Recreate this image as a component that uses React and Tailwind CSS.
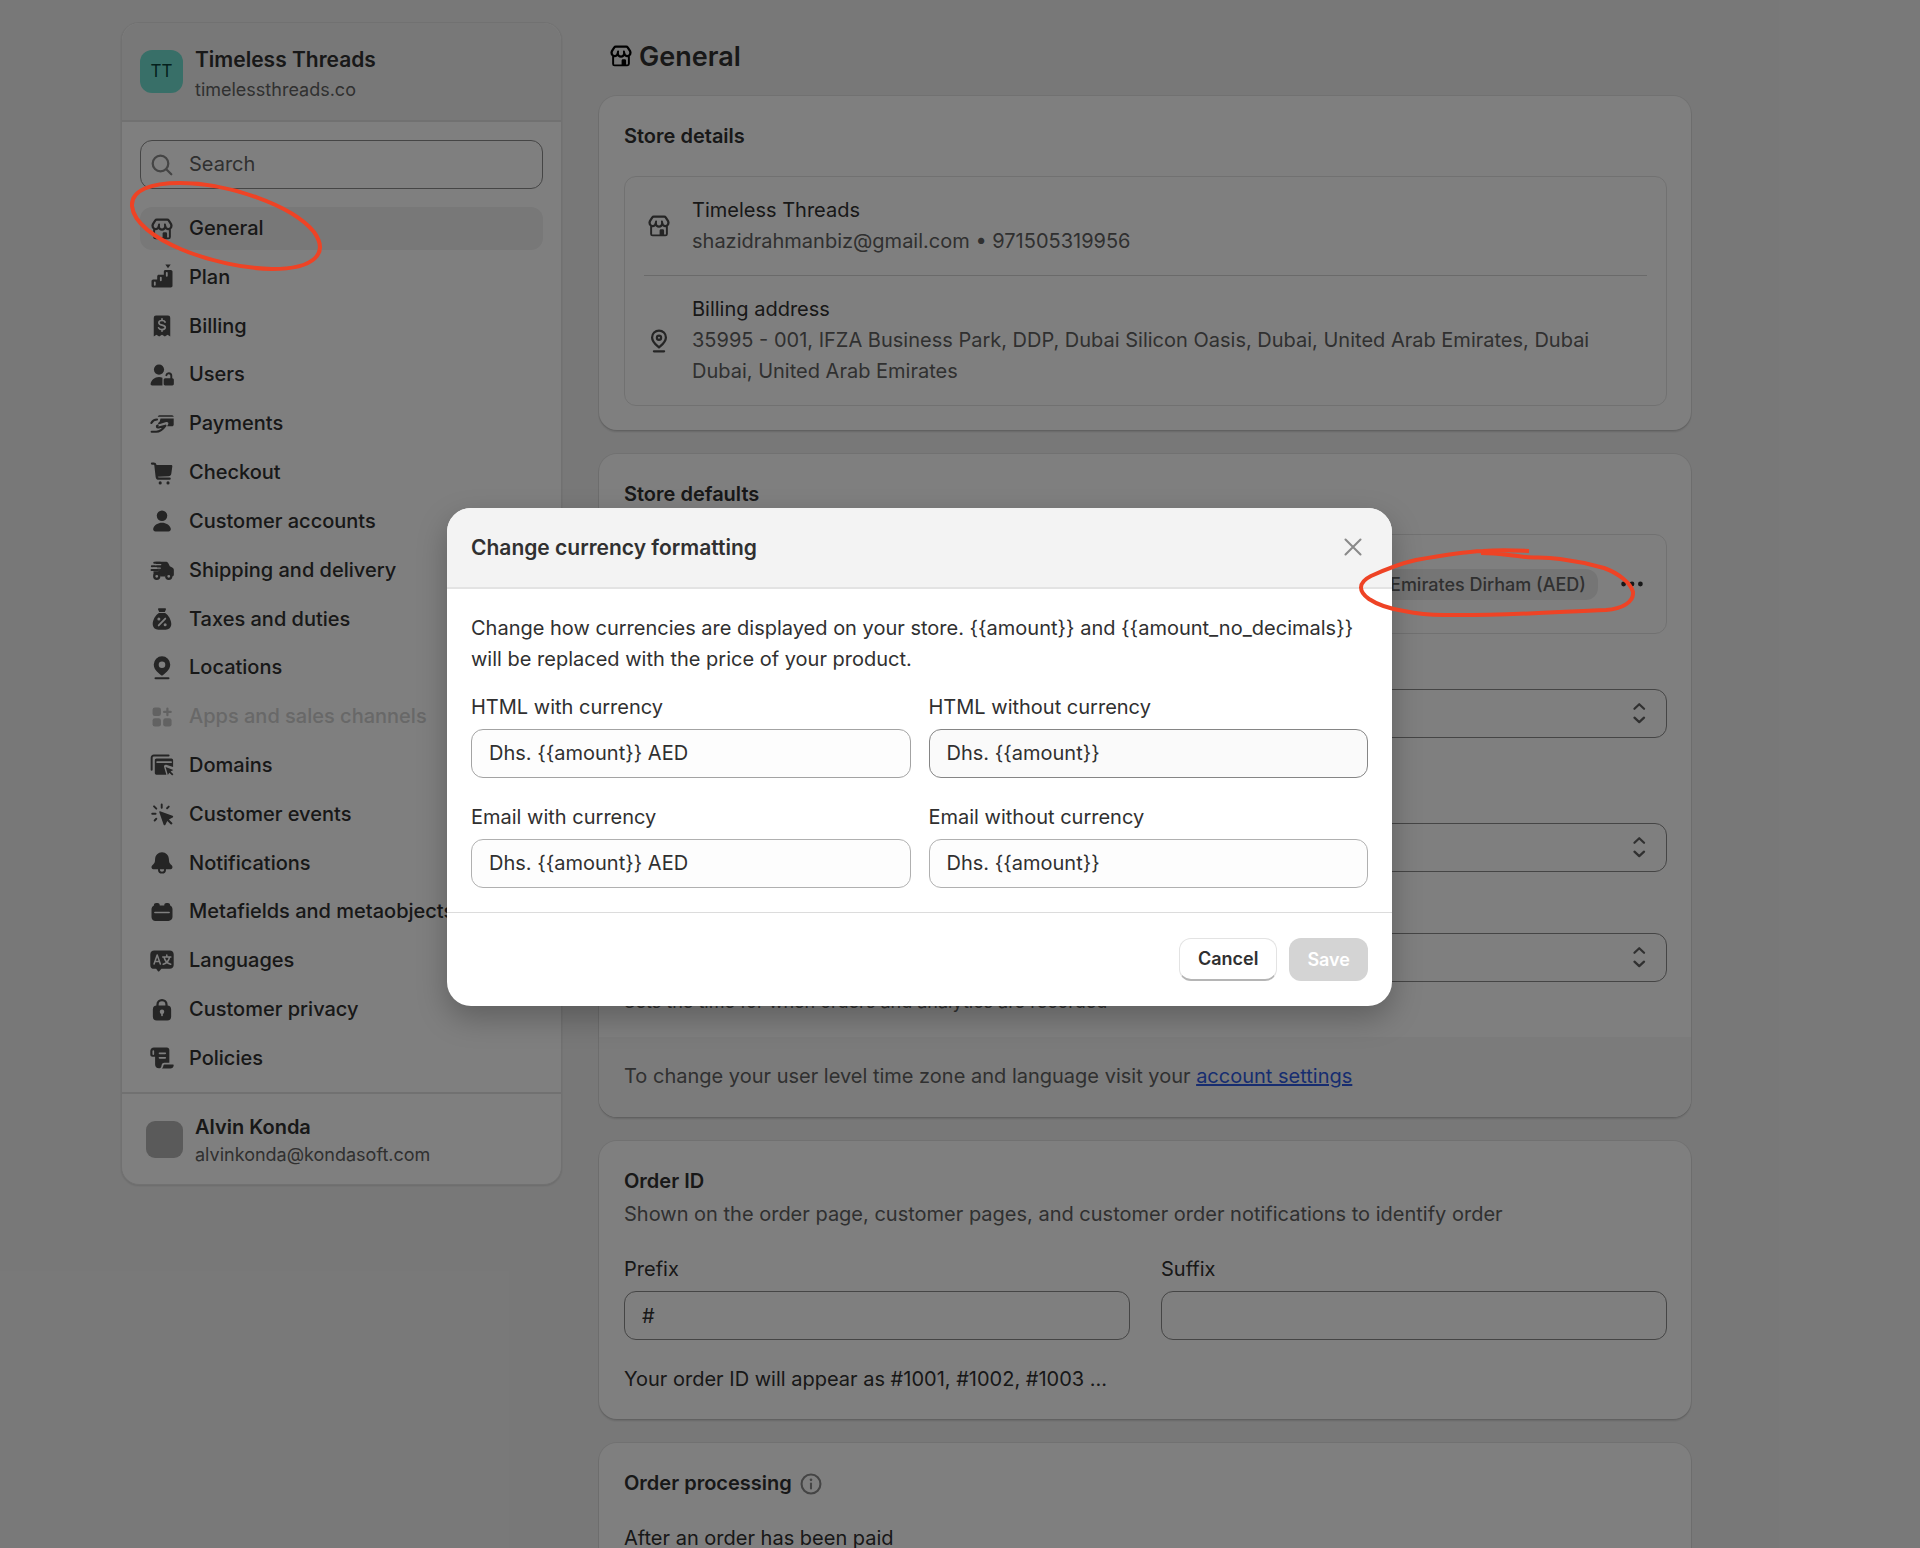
// App.jsx
import { useState } from "react";
import clsx from "clsx";

function Icon({ children, className }) {
  return (
    <svg viewBox="0 0 20 20" fill="currentColor" aria-hidden="true" className={clsx("size-[30px] shrink-0", className)}>
      {children}
    </svg>
  );
}

const line = { fill: "none", stroke: "currentColor", strokeWidth: 1.5, strokeLinecap: "round", strokeLinejoin: "round" };
const cut = { fill: "none", stroke: "#fff", strokeWidth: 1.1, strokeLinecap: "round", strokeLinejoin: "round" };

const StoreIcon = (props) => (
  <Icon {...props}>
    <path {...line} d="M6.5 3.75h7c.4 0 .75.2.95.55l1.500 2.300c.2.35.3.75.3 1.150a2.050 2.050 0 0 1-4.100.5 2.150 2.150 0 0 1-4.300 0 2.050 2.050 0 0 1-4.100-.5c0-.4.1-.8.3-1.150l1.500-2.300c.2-.35.55-.55.95-.55z" />
    <path {...line} strokeWidth={1.3} d="M7.850 8.100l.2-1.100M12.150 8.100l-.2-1.100M4.750 10.400v4.850c0 .55.45 1 1 1h8.500c.55 0 1-.45 1-1v-4.850" />
    <path d="M10.400 13.100c0-.5.400-.9.900-.9h1.200c.5 0 .9.400.9.900v3.400h-3z" />
  </Icon>
);

const PinIcon = () => (
  <Icon>
    <path {...line} d="M10 14.2c-1.3-1.2-4.6-3.3-4.6-6.6a4.6 4.6 0 0 1 9.2 0c0 3.3-3.3 5.4-4.6 6.6zM6.6 16.9h6.8" />
    <circle {...line} cx="10" cy="7.8" r="1.4" />
  </Icon>
);

const PlanIcon = () => (
  <Icon>
    <path d="M9.2 8.5h2V6.3c0-.6.5-1 1-1h3.700c.6 0 1.100.5 1.100 1v9.600c0 .6-.5 1.100-1.100 1.100H4.100c-.6 0-1.100-.5-1.100-1.100v-3.100c0-.6.5-1.100 1.100-1.100h2.700V9.500c0-.6.5-1 1-1z" />
    <path d="M12.2 1.700h3.600L14 4.100z" />
    <path {...cut} strokeWidth={1.2} d="M5.2 13.600v1.600M9.200 10.400v1.800M13.200 7.200v2" />
  </Icon>
);

const BillingIcon = () => (
  <Icon>
    <path d="M4.500 4.500A1.500 1.500 0 0 1 6 3h8a1.500 1.500 0 0 1 1.500 1.500V17l-1.800-1.200-1.800 1.200-1.900-1.200L8.100 17l-1.800-1.200L4.500 17z" />
    <path {...cut} d="M12.100 7.400c-.3-.8-1.100-1.100-2.100-1.100-1.200 0-2.100.5-2.100 1.500 0 2.200 4.300 1 4.300 3.100 0 1-.9 1.500-2.200 1.500-1.100 0-2-.4-2.300-1.200M10 5.200v1M10 12.500v1" />
  </Icon>
);

const UsersIcon = () => (
  <Icon>
    <circle cx="8" cy="6.400" r="3.400" />
    <path d="M10.300 17H3.400c-.6 0-1.100-.5-1-1.100.4-2.600 2.700-4.600 5.600-4.600.9 0 1.600.2 2.300.5z" />
    <path d="M11.100 13.200c0-.6.400-1.100 1-1.100h4.800c.600 0 1 .5 1 1.100v2.700c0 .6-.4 1.100-1 1.100h-4.800c-.6 0-1-.5-1-1.100z" />
    <path {...line} strokeWidth={1.3} d="M12.900 10.100c.2-.8.800-1.300 1.600-1.300 1 0 1.700.7 1.700 1.700v2" />
  </Icon>
);

const PaymentsIcon = () => (
  <Icon>
    <path d="M8.300 4.100h8.400c.6 0 1.100.5 1.100 1.100H7.200c0-.6.500-1.100 1.100-1.100zM9 6.400h8.800v4.100c0 .6-.5 1-1.100 1h-3.300l.8-1.500c.3-.9-.5-1.600-1.400-1.300l-5.200 1.600c-.6-.6.200-1.400.9-1.900z" />
    <path {...line} strokeWidth={1.400} d="M2.900 9.300c.8-1.500 1.800-2.200 3.800-2.300M3.100 15.200h3c2.600 0 4.400-1.500 6.200-4.100l-4.600 1.200c-1.200.2-1.500-.9-.6-1.300" />
  </Icon>
);

const CheckoutIcon = () => (
  <Icon>
    <path {...line} d="M3.300 3.700h1.200c.6 0 1 .4 1.100 1l.9 7.800c.1.800.6 1.300 1.400 1.300h7.200" />
    <path d="M5.600 4.600h10.500c.5 0 .9.400.8.900l-.7 5c-.1.900-.9 1.600-1.800 1.700l-8 .3z" />
    <circle cx="8.800" cy="16.600" r="1.050" />
    <circle cx="14" cy="16.600" r="1.050" />
  </Icon>
);

const PersonIcon = () => (
  <Icon>
    <circle cx="10" cy="6.500" r="3.500" />
    <path d="M4.200 14.900c.8-2.200 3-3.700 5.800-3.700s5 1.500 5.800 3.700c.4 1.100-.4 2.100-1.500 2.100H5.700c-1.100 0-1.900-1-1.500-2.100z" />
  </Icon>
);

const ShippingIcon = () => (
  <Icon>
    <path d="M5.600 4.500h6.900c.8 0 1.500.4 1.800 1.100l.9 1.900 1.600.8c.7.300 1.100 1 1.100 1.700v3c0 .7-.5 1.300-1.100 1.400a2.400 2.400 0 0 0-4.700 0H9a2.400 2.400 0 0 0-4.600-.6l-.1-3h3.200c.9 0 .9-1.400 0-1.400h-.6z" />
    <path {...line} strokeWidth={1.3} d="M4.800 5.200h4M3.200 7.500h5.200M3 10h4.500" />
    <path {...cut} strokeWidth={0.8} d="M5.500 6.350h3.700M4 8.800h4.900" />
    <circle {...line} cx="6.500" cy="14.200" r="1.700" />
    <circle {...line} cx="14.500" cy="14.200" r="1.700" />
  </Icon>
);

const TaxesIcon = () => (
  <Icon>
    <path d="M7.400 3.700c-.2-.5.100-.9.600-.9h4c.5 0 .8.400.6.900l-.7 1.600H8.100zM7.900 6h4.200c2.300 1.500 4.100 4.700 4.100 7.400 0 2.300-1.600 3.800-3.800 3.800H7.600c-2.200 0-3.800-1.500-3.800-3.800 0-2.700 1.800-5.900 4.100-7.400z" />
    <path {...cut} strokeWidth={1.2} d="M12.200 9.700l-4.400 4.600" />
    <circle cx="7.900" cy="10" r="1" fill="#fff" />
    <circle cx="12.100" cy="13.900" r="1" fill="#fff" />
  </Icon>
);

const LocationsIcon = () => (
  <Icon>
    <path fillRule="evenodd" d="M10 15.200c-1.700-1.300-5.500-3.700-5.500-7.500a5.500 5.500 0 0 1 11 0c0 3.800-3.800 6.200-5.500 7.500zM10 10a2.200 2.200 0 1 0 0-4.400A2.200 2.200 0 0 0 10 10z" />
    <path {...line} strokeWidth={1.400} d="M5.700 16.800h8.600" />
  </Icon>
);

const AppsIcon = () => (
  <Icon className="text-[#c4c4c4]">
    <rect x="3.700" y="3.700" width="5.600" height="5.600" rx="1.500" />
    <rect x="3.700" y="10.800" width="5.600" height="5.600" rx="1.500" />
    <rect x="10.800" y="10.800" width="5.600" height="5.600" rx="1.500" />
    <path {...line} d="M13.600 4.400v4.400M11.400 6.600h4.400" />
  </Icon>
);

const DomainsIcon = () => (
  <Icon>
    <path {...line} strokeWidth={1.300} d="M3.100 13.200V5.200c0-.9.600-1.500 1.500-1.500h9.800" />
    <path d="M5.200 6.700c0-.6.500-1.100 1.100-1.100h10c.6 0 1.100.5 1.100 1.100v4.700l-4.600-1.500c-.9-.3-1.700.500-1.400 1.400l1.500 5.200H6.300c-.6 0-1.100-.5-1.100-1.100z" />
    <path d="M12.400 11.400l5.200 1.900-1.900 1 1.900 1.900-.8.800-1.900-1.900-1 1.600z" />
    <path {...cut} d="M6.700 8.100h9.400" />
  </Icon>
);

const EventsIcon = () => (
  <Icon>
    <path d="M8.700 8.200l8.300 2.900c.6.200.6 1 .1 1.200l-2.500 1.300 2.500 2.600-1 1-2.600-2.600-1.200 2.500c-.3.600-1 .5-1.200 0L8.200 8.800c-.1-.4.200-.7.500-.6z" />
    <path {...line} strokeWidth={1.300} d="M9.800 3.600v2.200M4.700 4.900l1.500 1.500M3.500 9.800h2.200M6.200 13.200l-1.100 1.100M13.400 6.200l1.100-1.100" />
  </Icon>
);

const BellIcon = () => (
  <Icon>
    <path d="M10 2.800c2.600 0 4.500 2 4.600 4.500.1 2.300.4 2.900 1.700 4 1.300 1.200.7 2.900-1 2.900H4.700c-1.700 0-2.300-1.700-1-2.900 1.300-1.100 1.600-1.700 1.700-4C5.500 4.800 7.400 2.800 10 2.800z" />
    <path {...line} strokeWidth={1.300} d="M8 14.200v.4c0 1 .9 1.800 2 1.800s2-.8 2-1.800v-.4" />
  </Icon>
);

const MetafieldsIcon = () => (
  <Icon>
    <path d="M4.600 5.600V5.500c0-.9.6-1.500 1.500-1.500h.9c.9 0 1.500.6 1.500 1.500v.1h3V5.500c0-.9.6-1.500 1.500-1.500h.9c.9 0 1.500.6 1.500 1.500v.2c1 .4 1.600 1.400 1.600 2.500v5.200c0 1.500-1.200 2.600-2.700 2.600H5.700A2.600 2.600 0 0 1 3 13.400V8.200c0-1.100.6-2.200 1.600-2.600z" />
    <path {...cut} d="M5.300 10.300h9.400" />
  </Icon>
);

const LanguagesIcon = () => (
  <Icon>
    <path d="M4.800 3h10.400c1.500 0 2.600 1.100 2.600 2.600v7c0 1.500-1.100 2.600-2.600 2.600h-5.600l-1.400 1.600c-.3.300-.7.300-.9 0l-1.200-1.600H4.800a2.600 2.600 0 0 1-2.600-2.600v-7C2.200 4.100 3.300 3 4.800 3z" />
    <path {...cut} strokeWidth={1} d="M4.700 12l2.100-6 2.100 6M5.400 10.300h2.800M10.500 7.300h5.400M13.200 6v1.300M15 7.500c-.4 2.100-2.100 4-4.200 4.700M11.400 7.500c.4 2.100 2.200 4 4.400 4.700" />
  </Icon>
);

const LockIcon = () => (
  <Icon>
    <path {...line} d="M7 8V6.400a3 3 0 0 1 6 0V8" />
    <rect x="3.900" y="7" width="12.200" height="10" rx="2.600" />
    <circle cx="10" cy="11.100" r="1.500" fill="#fff" />
    <path {...cut} d="M10 11.500v2.100" />
  </Icon>
);

const PoliciesIcon = () => (
  <Icon>
    <path d="M4.600 3h8.700c.9 0 1.600.7 1.600 1.600v8.600h-3.300c-1.200 0-1.800.8-1.900 1.800-.1 1.300-.8 1.900-1.800 1.900-1.500 0-2.500-1-2.500-2.500V9.200H3.600c-.8 0-1.400-.5-1.400-1.300V5.400C2.200 4 3.200 3 4.600 3z" />
    <path d="M11.900 14.300h5.300c.4 0 .7.300.6.700-.2 1.200-1 2-2.200 2H9.900c.6-.5.900-1.100 1-1.900.1-.5.500-.8 1-.8z" />
    <path {...cut} d="M4.200 5.300v2.200M8.300 6.900h3.900M8.300 9.900h3.900" />
  </Icon>
);

const navItems = [
  { label: "General", icon: StoreIcon, active: true },
  { label: "Plan", icon: PlanIcon },
  { label: "Billing", icon: BillingIcon },
  { label: "Users", icon: UsersIcon },
  { label: "Payments", icon: PaymentsIcon },
  { label: "Checkout", icon: CheckoutIcon },
  { label: "Customer accounts", icon: PersonIcon },
  { label: "Shipping and delivery", icon: ShippingIcon },
  { label: "Taxes and duties", icon: TaxesIcon },
  { label: "Locations", icon: LocationsIcon },
  { label: "Apps and sales channels", icon: AppsIcon, disabled: true },
  { label: "Domains", icon: DomainsIcon },
  { label: "Customer events", icon: EventsIcon },
  { label: "Notifications", icon: BellIcon },
  { label: "Metafields and metaobjects", icon: MetafieldsIcon },
  { label: "Languages", icon: LanguagesIcon },
  { label: "Customer privacy", icon: LockIcon },
  { label: "Policies", icon: PoliciesIcon },
];

function Sidebar() {
  return (
    <aside className="w-[441px] shrink-0 rounded-[18px] border border-[#e3e3e3] bg-white shadow-[0_1px_2px_rgba(0,0,0,0.12)]">
      <div className="flex h-[99px] items-center gap-3 rounded-t-[18px] border-b-2 border-[#e3e3e3] bg-[#f1f1f1] px-[18px]">
        <div className="flex size-[43px] items-center justify-center rounded-xl bg-[#70dfd0] text-[17px] text-[#08423b]">TT</div>
        <div className="pt-[6px]">
          <div className="text-[21px] leading-[30px] font-semibold text-[#303030]">Timeless Threads</div>
          <div className="text-[18px] leading-[30px] text-[#616161]">timelessthreads.co</div>
        </div>
      </div>

      <div className="px-[18px] pt-[18px] pb-3">
        <label className="flex h-[49px] items-center gap-3 rounded-xl border border-[#8a8a8a] px-[6px] text-[#8a8a8a]">
          <Icon>
            <circle {...line} cx="9" cy="9" r="5.200" />
            <path {...line} d="M13 13l3.200 3.200" />
          </Icon>
          <input type="search" aria-label="Search" placeholder="Search" className="w-full bg-transparent text-[20px] outline-none placeholder:text-[#616161]" />
        </label>

        <nav className="mt-[18px] flex h-[873px] flex-col justify-between">
          {navItems.map(({ label, icon: ItemIcon, active, disabled }) => (
            <a
              key={label}
              href="#"
              className={clsx(
                "flex h-[43px] items-center gap-3 rounded-xl px-[7px] text-[20px] font-medium whitespace-nowrap",
                active && "bg-[#f1f1f1]",
                disabled ? "text-[#d0d0d0]" : "text-[#303030]"
              )}
            >
              <span className={disabled ? "" : "text-[#4a4a4a]"}>
                <ItemIcon />
              </span>
              {label}
            </a>
          ))}
        </nav>
      </div>

      <div className="flex h-[92px] items-center gap-3 border-t-2 border-[#e3e3e3] px-6">
        <div className="size-[37px] rounded-[9px] bg-[#b5b5b5]" />
        <div className="pt-[3px]">
          <div className="text-[20px] leading-[27px] font-semibold text-[#303030]">Alvin Konda</div>
          <div className="text-[18px] leading-[27px] text-[#616161]">alvinkonda@kondasoft.com</div>
        </div>
      </div>
    </aside>
  );
}

function Card({ children, className }) {
  return (
    <section className={clsx("rounded-[18px] bg-white shadow-[0_0_0_1px_rgba(0,0,0,0.06),0_2px_2px_rgba(0,0,0,0.14)]", className)}>
      {children}
    </section>
  );
}

function SelectField({ id, label, value }) {
  return (
    <div className="min-w-0 flex-1">
      <label htmlFor={id} className="mb-[6px] block">{label}</label>
      <div className="relative">
        <select id={id} className="block h-[49px] w-full appearance-none rounded-xl border border-[#8a8a8a] bg-white px-[18px]">
          <option>{value}</option>
        </select>
        <Icon className="pointer-events-none absolute top-[9px] right-3 text-[#616161]">
          <path {...line} d="M6.300 7.200l3.200-3 3.200 3M6.300 13.100l3.200 3 3.200-3" />
        </Icon>
      </div>
    </div>
  );
}

function TextField({ id, label, defaultValue, className }) {
  return (
    <div className="min-w-0 flex-1">
      <label htmlFor={id} className="mb-[6px] block">{label}</label>
      <input
        id={id}
        type="text"
        defaultValue={defaultValue}
        className={clsx("block h-[49px] w-full rounded-xl border px-[17px] outline-none", className)}
      />
    </div>
  );
}

function StoreDetails() {
  return (
    <Card className="pt-[25px] pr-6 pb-6 pl-[25px]">
      <h2 className="font-semibold">Store details</h2>
      <div className="mt-6 rounded-xl border border-[#e3e3e3] px-[19px]">
        <div className="flex items-center gap-[18px] border-b border-[#d4d4d4] py-[18px]">
          <StoreIcon className="text-[#4a4a4a]" />
          <div>
            <div>Timeless Threads</div>
            <div className="text-[#616161]">shazidrahmanbiz@gmail.com • 971505319956</div>
          </div>
        </div>
        <div className="flex items-center gap-[18px] py-[18px] text-[#4a4a4a]">
          <PinIcon />
          <div>
            <div className="text-[#303030]">Billing address</div>
            <div className="text-[#616161]">
              35995 - 001, IFZA Business Park, DDP, Dubai Silicon Oasis, Dubai, United Arab Emirates, Dubai
              <br />
              Dubai, United Arab Emirates
            </div>
          </div>
        </div>
      </div>
    </Card>
  );
}

function StoreDefaults() {
  return (
    <Card>
      <div className="pt-[25px] pr-6 pb-5 pl-[25px]">
        <h2 className="font-semibold">Store defaults</h2>
        <div className="mt-6 flex items-center rounded-xl border border-[#e3e3e3] px-[19px] py-[18px]">
          <div className="flex-1">
            <div>Currency display</div>
            <div className="text-[#616161]">To manage the currencies customers see</div>
          </div>
          <span className="rounded-xl bg-[#ebebeb] px-3 text-[18px] leading-[31px] font-medium text-[#616161]">
            United Arab Emirates Dirham (AED)
          </span>
          <button type="button" aria-label="More actions" className="ml-[19px] text-[#303030]">
            <Icon>
              <circle cx="4.400" cy="10" r="1.600" />
              <circle cx="10" cy="10" r="1.600" />
              <circle cx="15.600" cy="10" r="1.600" />
            </Icon>
          </button>
        </div>

        <div className="mt-[18px]">
          <SelectField id="region" label="Backup region" value="United Arab Emirates" />
          <p className="mt-1 text-[18px] leading-[31px] text-[#616161]">Determines settings for customers outside of your markets</p>
        </div>
        <div className="mt-[13px] flex gap-[31px]">
          <SelectField id="units" label="Unit system" value="Metric system" />
          <SelectField id="weight" label="Default weight unit" value="" />
        </div>
        <div className="mt-6">
          <SelectField id="timezone" label="Time zone" value="(GMT+04:00) Abu Dhabi, Muscat" />
          <p className="mt-1 text-[18px] leading-[31px] text-[#616161]">Sets the time for when orders and analytics are recorded</p>
        </div>
      </div>
      <div className="rounded-b-[18px] bg-[#f7f7f7] px-[25px] pt-6 pb-[25px] text-[#616161]">
        To change your user level time zone and language visit your{" "}
        <a href="#" className="text-[#2f5be0] underline">account settings</a>
      </div>
    </Card>
  );
}

function OrderId() {
  return (
    <Card className="pt-[25px] pr-6 pb-6 pl-[25px]">
      <h2 className="font-semibold">Order ID</h2>
      <p className="mt-[2px] text-[#616161]">Shown on the order page, customer pages, and customer order notifications to identify order</p>
      <div className="mt-6 flex gap-[31px]">
        <TextField id="prefix" label="Prefix" defaultValue="#" className="border-[#8a8a8a]" />
        <TextField id="suffix" label="Suffix" defaultValue="" className="border-[#8a8a8a]" />
      </div>
      <p className="mt-6">Your order ID will appear as #1001, #1002, #1003 ...</p>
    </Card>
  );
}

function OrderProcessing() {
  return (
    <Card className="pt-[25px] pr-6 pb-6 pl-[25px]">
      <h2 className="flex items-center gap-1 font-semibold">
        Order processing
        <Icon className="text-[#8a8a8a]">
          <circle {...line} strokeWidth={1.400} cx="10" cy="10" r="6.300" />
          <path {...line} strokeWidth={1.400} d="M10 9.700v3.300" />
          <circle cx="10" cy="7.200" r=".9" />
        </Icon>
      </h2>
      <p className="mt-6">After an order has been paid</p>
    </Card>
  );
}

function CurrencyModal({ onClose }) {
  return (
    <div className="absolute inset-0 flex items-center justify-center bg-black/50 pr-[81px] pb-[35px]">
      <div
        role="dialog"
        aria-labelledby="modal-title"
        className="w-[945px] overflow-hidden rounded-3xl bg-white shadow-[0_12px_30px_rgba(0,0,0,0.25)]"
      >
        <div className="flex h-[81px] items-center justify-between border-b-2 border-[#e3e3e3] bg-[#f3f3f3] px-6">
          <h2 id="modal-title" className="text-[21px] font-semibold">Change currency formatting</h2>
          <button type="button" aria-label="Close" onClick={onClose} className="text-[#8a8a8a]">
            <Icon>
              <path {...line} strokeWidth={1.400} d="M5 5l10 10M15 5L5 15" />
            </Icon>
          </button>
        </div>

        <div className="p-6">
          <p>
            {"Change how currencies are displayed on your store. {{amount}} and {{amount_no_decimals}}"}
            <br />
            will be replaced with the price of your product.
          </p>
          <div className="mt-[17px] grid grid-cols-2 gap-x-[18px] gap-y-6">
            <TextField id="html-with" label="HTML with currency" defaultValue="Dhs. {{amount}} AED" className="border-[#a3a3a3] bg-[#fdfdfd]" />
            <TextField id="html-without" label="HTML without currency" defaultValue="Dhs. {{amount}}" className="border-[#858585] bg-[#fafafa]" />
            <TextField id="email-with" label="Email with currency" defaultValue="Dhs. {{amount}} AED" className="border-[#b0b0b0] bg-[#fdfdfd]" />
            <TextField id="email-without" label="Email without currency" defaultValue="Dhs. {{amount}}" className="border-[#b0b0b0] bg-[#fdfdfd]" />
          </div>
        </div>

        <div className="flex h-[94px] items-center justify-end gap-3 border-t border-[#dcdcdc] px-6">
          <button
            type="button"
            onClick={onClose}
            className="h-[43px] rounded-xl border border-b-2 border-[#e3e3e3] border-b-[#b5b5b5] px-[18px] text-[18px] font-semibold"
          >
            Cancel
          </button>
          <button type="button" disabled className="h-[43px] rounded-xl bg-[#d4d4d4] px-[18px] text-[18px] font-semibold text-white">
            Save
          </button>
        </div>
      </div>
    </div>
  );
}

// hand drawn circles that sit on top of everything
function Markers() {
  return (
    <svg
      aria-hidden="true"
      fill="none"
      stroke="#ee4325"
      strokeWidth="4"
      className="pointer-events-none absolute inset-0 h-full w-full"
    >
      <path d="M132 206C131 190 151 183 180 183C228 183 292 205 314 232C329 253 315 269 272 269C215 268 135 239 132 206Z" />
      <path d="M1529 551C1510 550 1497 550 1483 551C1460 552 1438 556 1416 560C1398 564 1382 571 1371 576C1357 583 1359 592 1369 599C1378 605 1391 609 1404 611C1418 614 1430 615 1444 615C1500 616 1555 612 1606 610C1622 609 1634 602 1633 592C1631 583 1618 573 1604 568C1590 564 1576 561 1560 559C1544 557 1536 558 1526 557C1512 556 1499 553 1481 553" />
    </svg>
  );
}

export default function App() {
  const [open, setOpen] = useState(true);

  return (
    <div className="relative h-screen overflow-hidden bg-[#f1f1f1] font-['Inter',sans-serif] text-[20px] leading-[31px] text-[#303030]">
      <div className="flex items-start gap-[37px] pt-[22px] pr-[229px] pl-[121px]">
        <Sidebar />
        <main className="flex min-w-0 flex-1 flex-col gap-6 pt-4">
          <h1 className="-mb-[2px] flex h-9 items-center gap-[3px] pl-[7px] text-[27px] font-semibold">
            <StoreIcon className="text-black" />
            General
          </h1>
          <StoreDetails />
          <StoreDefaults />
          <OrderId />
          <OrderProcessing />
        </main>
      </div>
      {open && <CurrencyModal onClose={() => setOpen(false)} />}
      <Markers />
    </div>
  );
}
